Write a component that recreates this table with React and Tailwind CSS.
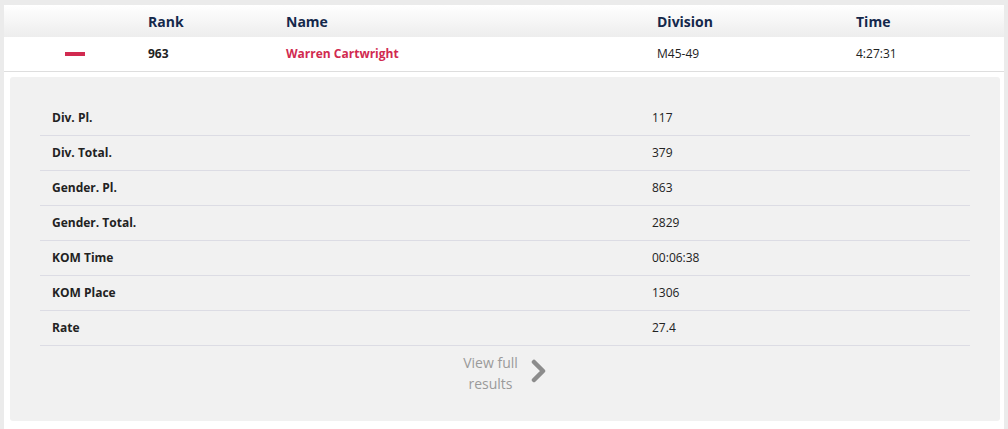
import React from "react";

const details = [
  ["Div. Pl.", "117"],
  ["Div. Total.", "379"],
  ["Gender. Pl.", "863"],
  ["Gender. Total.", "2829"],
  ["KOM Time", "00:06:38"],
  ["KOM Place", "1306"],
  ["Rate", "27.4"],
];

export default function App() {
  return (
    <div className="min-h-[429px] bg-[#ebebeb] pt-[5px] px-[4px] font-['Open_Sans',sans-serif]">
      <div className="bg-white min-h-[424px] pb-[8px]">
        {/* Table header */}
        <div className="grid grid-cols-[144px_138px_371px_199px_1fr] h-[32px] items-center bg-gradient-to-b from-white to-[#ededed] text-[14px] font-bold text-[#14284b]">
          <div />
          <div>Rank</div>
          <div>Name</div>
          <div>Division</div>
          <div>Time</div>
        </div>

        {/* Result row */}
        <div className="grid grid-cols-[144px_138px_371px_199px_1fr] h-[35px] items-center border-b border-[#dedede] text-[12px] text-[#222]">
          <div className="pl-[61px]">
            <div className="w-[20px] h-[4px] bg-[#d12a50]" />
          </div>
          <div className="font-bold">963</div>
          <div className="font-bold text-[#d12a50]">Warren Cartwright</div>
          <div>M45-49</div>
          <div>4:27:31</div>
        </div>

        {/* Expanded details */}
        <div className="ml-[6px] mr-[4px] mt-[5px] h-[344px] rounded-[3px] bg-[#f1f1f1] px-[30px] pt-[24px]">
          {details.map(([label, value]) => (
            <div
              key={label}
              className="grid grid-cols-[600px_1fr] h-[35px] items-center border-b border-[#dcdce4] pl-[12px] text-[12px] text-[#222]"
            >
              <div className="font-bold">{label}</div>
              <div>{value}</div>
            </div>
          ))}

          <div className="mt-[6px] flex items-center justify-center gap-[13px]">
            <div className="text-center text-[14px] leading-[21px] text-[#9a9a9a]">
              View full
              <br />
              results
            </div>
            <svg width="16" height="24" viewBox="0 0 16 24" className="mt-[-4px]">
              <polyline
                points="3,3 12,12 3,21"
                fill="none"
                stroke="#8c8c8c"
                strokeWidth="4.5"
                strokeLinecap="round"
                strokeLinejoin="round"
              />
            </svg>
          </div>
        </div>
      </div>
    </div>
  );
}
